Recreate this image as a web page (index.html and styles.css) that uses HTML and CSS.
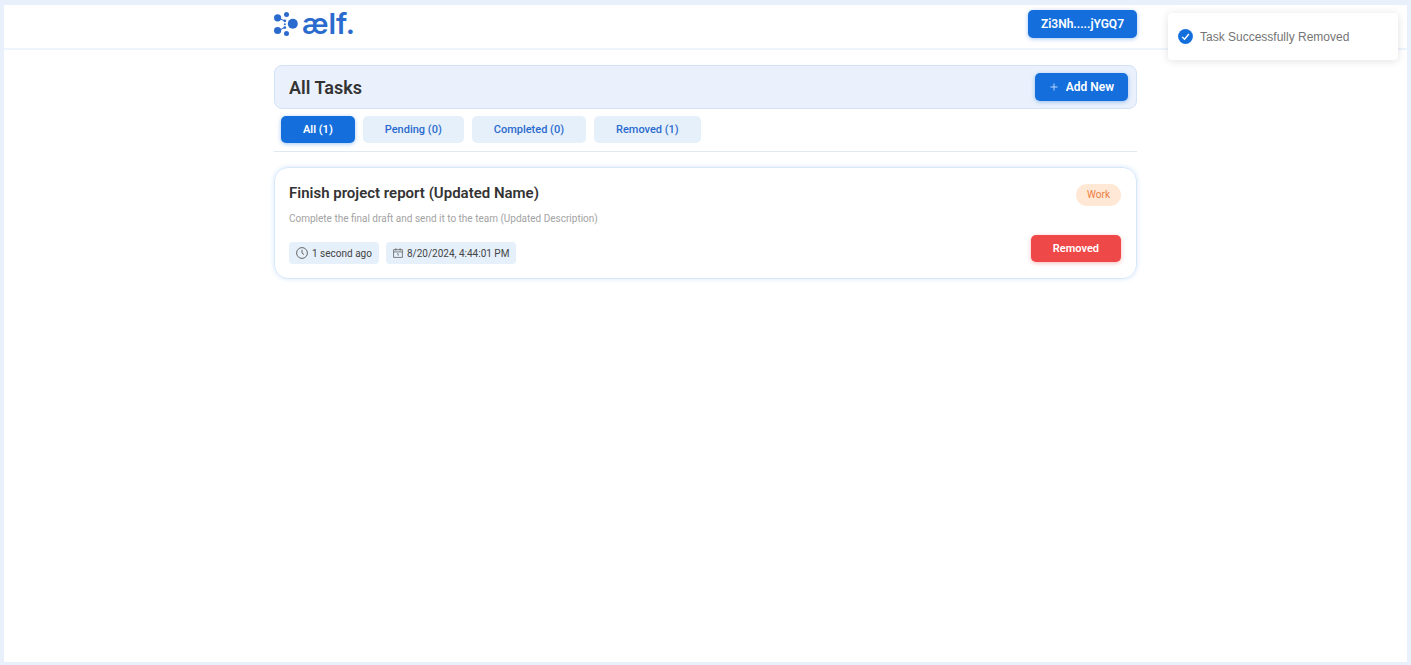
FILE: index.html
```html
<!DOCTYPE html>
<html lang="en">
<head>
<meta charset="utf-8">
<title>Todo dApp</title>
<link rel="stylesheet" href="styles.css">
</head>
<body>
<div class="page">
  <header class="header">
    <div class="container header-row">
      <a class="logo" href="#" aria-label="aelf home">
        <svg class="logo-mark" viewBox="0 0 24 24" aria-hidden="true">
          <path d="M4 6 L10 8.500 M4 18.500 L10 16" class="logo-link"/>
          <circle cx="3.600" cy="5.800" r="3.600"/>
          <circle cx="12.500" cy="2.500" r="2.500"/>
          <circle cx="10.800" cy="8.800" r="1.400"/>
          <circle cx="10.800" cy="12.200" r="1"/>
          <circle cx="10.800" cy="15.600" r="1.400"/>
          <circle cx="18.800" cy="11.800" r="5"/>
          <circle cx="3.600" cy="18.500" r="3.600"/>
          <circle cx="12.500" cy="21.400" r="2.500"/>
        </svg>
        <span class="logo-text">ælf.</span>
      </a>
      <button class="btn" type="button">Zi3Nh.....jYGQ7</button>
    </div>
  </header>
  <main class="container main">
    <section class="title-bar">
      <h1 class="title">All Tasks</h1>
      <button class="btn btn-add" type="button">
        <svg class="plus" viewBox="0 0 8 8" aria-hidden="true"><path d="M4 0.500V7.500M0.500 4H7.500"/></svg>
        Add New
      </button>
    </section>
    <nav class="tabs">
      <button class="tab tab-active" type="button">All (1)</button>
      <button class="tab" type="button">Pending (0)</button>
      <button class="tab" type="button">Completed (0)</button>
      <button class="tab" type="button">Removed (1)</button>
    </nav>
    <article class="card">
      <div class="card-info">
        <h2 class="card-title">Finish project report (Updated Name)</h2>
        <p class="card-text">Complete the final draft and send it to the team (Updated Description)</p>
        <div class="chips">
          <span class="chip">
            <svg class="chip-icon" viewBox="0 0 12 12" aria-hidden="true"><circle cx="6" cy="6" r="5.400"/><path d="M6 2.800V6L8 7.600"/></svg>
            1 second ago
          </span>
          <span class="chip">
            <svg class="chip-icon chip-icon-small" viewBox="0 0 12 12" aria-hidden="true"><path d="M0.700 2H11.300V11.300H0.700ZM0.700 4.700H11.300M3.500 0.300V3.200M8.500 0.300V3.200M5.200 6.800H6.200V9.200"/></svg>
            8/20/2024, 4:44:01 PM
          </span>
        </div>
      </div>
      <div class="card-side">
        <span class="badge">Work</span>
        <button class="btn btn-removed" type="button">Removed</button>
      </div>
    </article>
  </main>
  <div class="toast" role="status">
    <svg class="toast-icon" viewBox="0 0 16 16" aria-hidden="true"><circle cx="8" cy="8" r="7.900"/><path d="M4.400 8.400L7 11L11.600 5.400"/></svg>
    Task Successfully Removed
  </div>
</div>
</body>
</html>
```
FILE: styles.css
```css
* {
  box-sizing: border-box;
}

body {
  margin: 0;
  font-family: Roboto, "Liberation Sans", sans-serif;
  color: #333;
  background: #e8f0fb;
}

button {
  font-family: inherit;
  border: 0;
  cursor: pointer;
}

.page {
  min-height: 100vh;
  border: solid #e8f0fb;
  border-width: 5px 4px 3px;
  background: #fff;
}

.container {
  width: 100%;
  max-width: 863px;
  margin: 0 auto;
}

.header {
  border-bottom: 2px solid #eef4fb;
}

.header-row {
  display: flex;
  align-items: center;
  justify-content: space-between;
  height: 43px;
  padding-bottom: 5px;
}

.logo {
  display: flex;
  align-items: center;
  gap: 4px;
  color: #2b6bce;
  text-decoration: none;
}

.logo-mark {
  width: 24px;
  height: 24px;
  fill: currentColor;
}

.logo-link {
  stroke: currentColor;
  stroke-width: 1;
}

.logo-text {
  font: 600 29px/32px Inter, sans-serif;
}

.btn {
  height: 28px;
  padding: 0 13px;
  border-radius: 5px;
  font-size: 12px;
  font-weight: 600;
  color: #fff;
  background: #146fdd;
  box-shadow: 0 1px 4px #146fdd66;
}

.main {
  padding-top: 15px;
}

.title-bar {
  display: flex;
  align-items: center;
  justify-content: space-between;
  height: 44px;
  padding: 0 8px 0 14px;
  border: 1px solid #d3e2f7;
  border-radius: 8px;
  background: #eaf1fc;
}

.title {
  margin: 0;
  font-size: 18px;
  font-weight: 600;
}

.btn-add {
  display: flex;
  align-items: center;
  gap: 8px;
  padding: 0 14px 0 15px;
}

.plus {
  width: 8px;
  height: 8px;
  fill: none;
  stroke: #b9d6f8;
  stroke-width: 1;
}

.tabs {
  display: flex;
  gap: 8px;
  padding: 7px 7px 8px;
  border-bottom: 1px solid #e0e8f1;
}

.tab {
  height: 27px;
  padding: 0 22px;
  border-radius: 5px;
  font-size: 11px;
  font-weight: 500;
  color: #2b6bce;
  background: #e6f0fb;
}

.tab-active {
  font-weight: 600;
  color: #fff;
  background: #146fdd;
  box-shadow: 0 1px 4px #146fdd66;
}

.card {
  display: flex;
  justify-content: space-between;
  margin-top: 15px;
  padding: 16px 15px 14px 14px;
  border: 1px solid #d6e7fa;
  border-radius: 14px;
  box-shadow: 0 0 5px #d6e7fa;
}

.card-title {
  margin: 0;
  font-size: 15px;
  line-height: 18px;
  font-weight: 600;
}

.card-text {
  margin: 9px 0 15px;
  font-size: 10px;
  line-height: 16px;
  color: #a3a3a3;
}

.chips {
  display: flex;
  gap: 7px;
}

.chip {
  display: flex;
  align-items: center;
  gap: 4px;
  height: 22px;
  padding: 0 7px;
  border-radius: 4px;
  font-size: 10px;
  color: #444;
  background: #e6f0fb;
}

.chip-icon {
  width: 12px;
  height: 12px;
  fill: none;
  stroke: #666;
  stroke-width: 1;
}

.chip-icon-small {
  width: 10px;
  height: 10px;
}

.card-side {
  display: flex;
  flex-direction: column;
  align-items: flex-end;
  gap: 29px;
}

.badge {
  padding: 0 11px;
  border-radius: 11px;
  font-size: 10px;
  line-height: 22px;
  color: #ec8040;
  background: #ffe8d6;
}

.btn-removed {
  height: 27px;
  padding: 0 22px;
  font-size: 11px;
  background: #ee4848;
  box-shadow: 0 1px 4px #ee484866;
}

.toast {
  position: absolute;
  top: 13px;
  right: 13px;
  display: flex;
  align-items: center;
  gap: 7px;
  width: 230px;
  height: 47px;
  padding: 0 10px;
  border-radius: 4px;
  font: 12px "Liberation Sans", sans-serif;
  color: #757575;
  background: #fff;
  box-shadow: 0 1px 8px #0000001f;
}

.toast-icon {
  width: 15px;
  height: 15px;
  fill: #146fdd;
}

.toast-icon path {
  fill: none;
  stroke: #fff;
  stroke-width: 1.5;
}
```
